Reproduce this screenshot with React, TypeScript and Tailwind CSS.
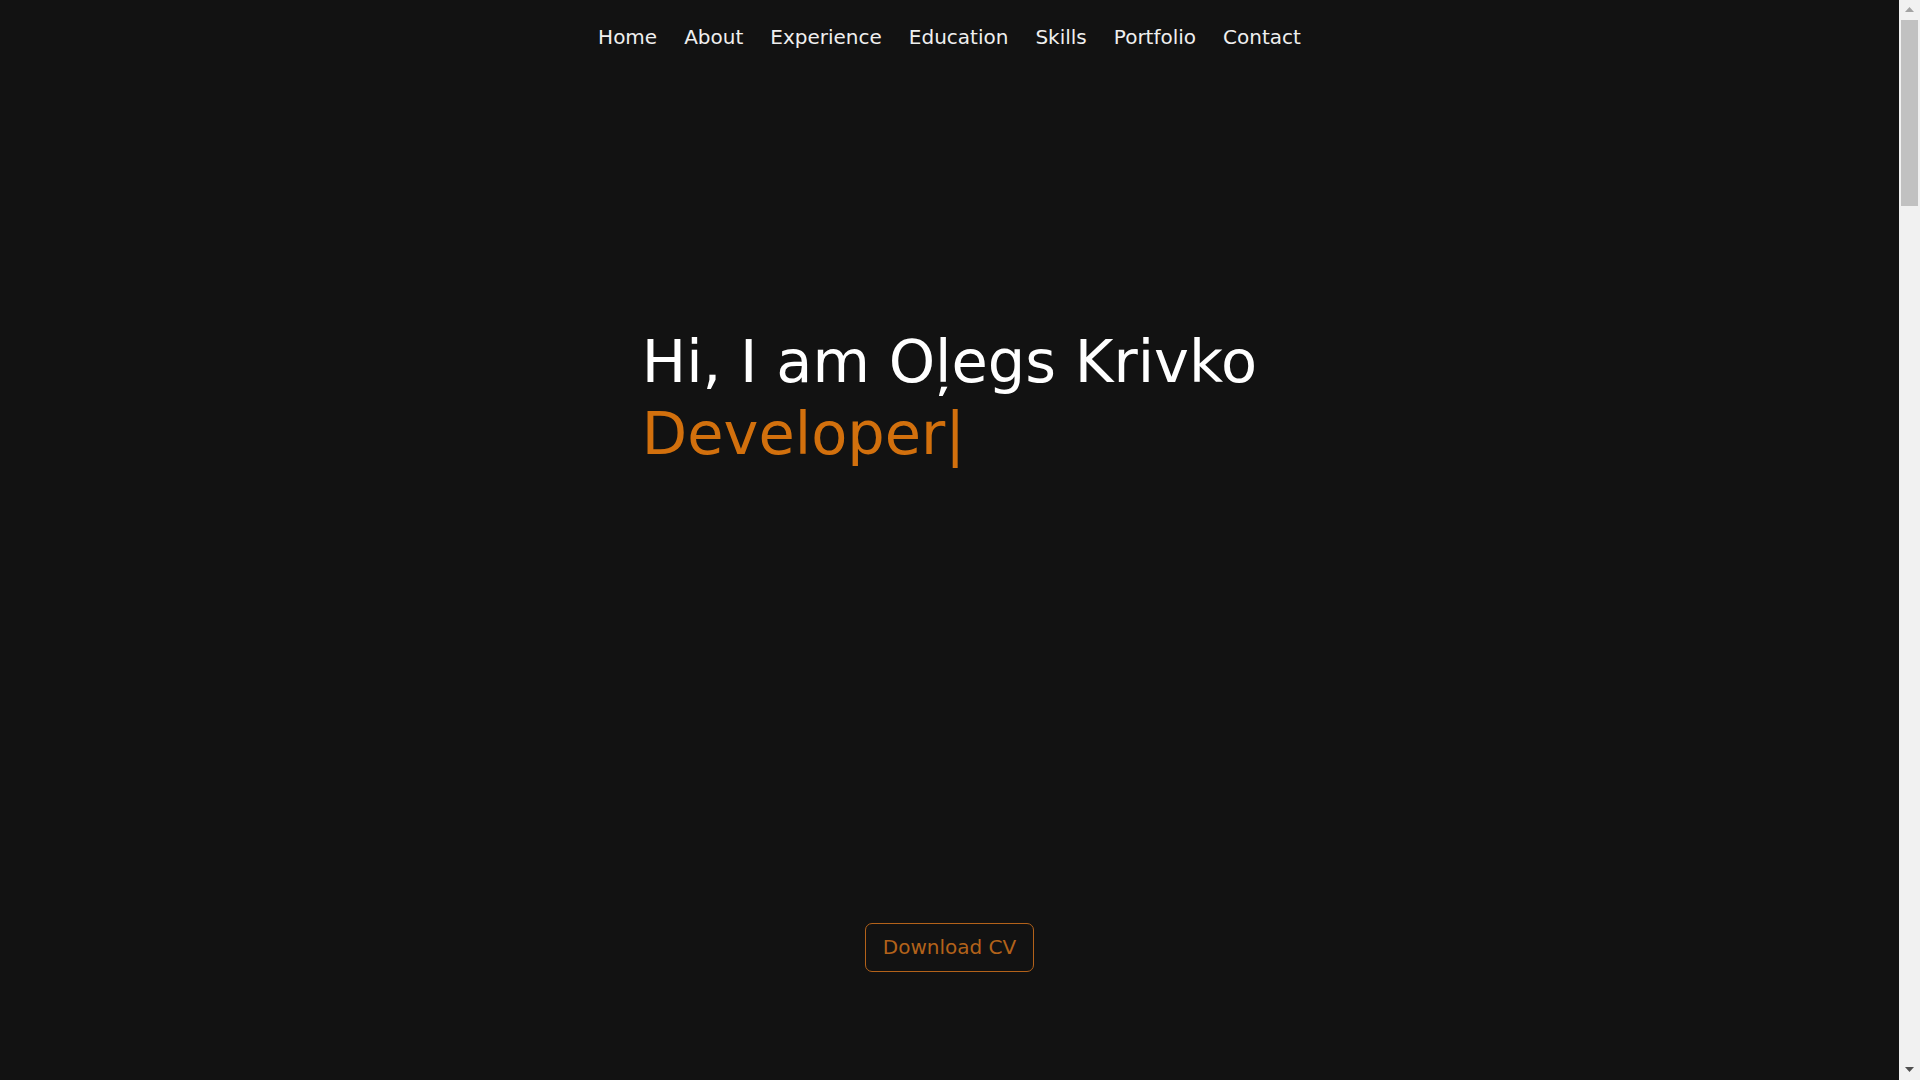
import React from "react";

const links = ["Home", "About", "Experience", "Education", "Skills", "Portfolio", "Contact"];

function Scrollbar() {
  return (
    <div className="flex h-full w-[21px] shrink-0 flex-col items-center bg-[#f1f1f1]">
      <div className="flex h-[19px] w-full items-center justify-center">
        <svg width="9" height="5" viewBox="0 0 9 5">
          <path d="M0 5 L4.5 0 L9 5 Z" fill="#a3a3a3" />
        </svg>
      </div>
      <div className="ml-[2px] mr-[2px] mt-[1px] h-[186px] w-[17px] bg-[#c1c1c1]" />
      <div className="flex-1" />
      <div className="flex h-[21px] w-full items-center justify-center">
        <svg width="9" height="5" viewBox="0 0 9 5">
          <path d="M0 0 L9 0 L4.5 5 Z" fill="#505050" />
        </svg>
      </div>
    </div>
  );
}

export default function App() {
  return (
    <div
      className="flex h-[1080px] w-full overflow-hidden bg-[#121212] text-white"
      style={{ fontFamily: '"DejaVu Sans", "Noto Sans", sans-serif' }}
    >
      <main className="flex h-full min-w-0 flex-1 flex-col">
        <nav className="flex h-[74px] items-center justify-center gap-[27px]">
          {links.map((l) => (
            <a key={l} href={`#${l.toLowerCase()}`} className="text-[20px] leading-[28px] text-[#efefef]">
              {l}
            </a>
          ))}
        </nav>

        <section id="home" className="flex flex-1 flex-col items-center pt-[252px]">
          <h1 className="w-fit text-[59px] font-normal leading-[72px]">
            <span className="block text-white">Hi, I am Oļegs Krivko</span>
            <span className="block text-[#d2700d]">Developer|</span>
          </h1>
          <a
            href="#"
            className="mt-[453px] rounded-[7px] border border-[#b3621a] px-[17px] py-[10px] text-[20px] leading-[27px] text-[#b3621a]"
          >
            Download CV
          </a>
        </section>
      </main>
      <Scrollbar />
    </div>
  );
}
